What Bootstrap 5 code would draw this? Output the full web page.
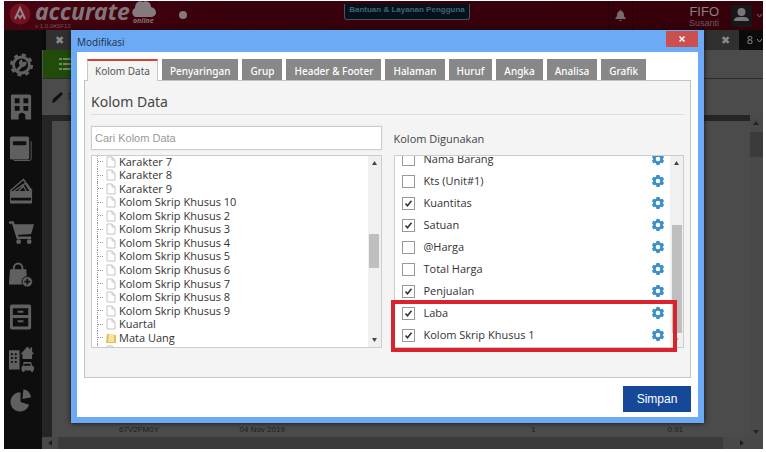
<!DOCTYPE html>
<html lang="id">
<head>
<meta charset="utf-8">
<meta name="viewport" content="width=device-width, initial-scale=1">
<title>Accurate Online</title>
<link href="https://cdn.jsdelivr.net/npm/bootstrap@5.3.0/dist/css/bootstrap.min.css" rel="stylesheet">
<style>
body{background:#fff;font:11px/14px "Open Sans","Noto Sans",sans-serif;color:#333;min-height:100vh;padding:1px 3px 3px 4px;overflow:hidden}
button{border:0;padding:0;background:none;color:inherit;font:inherit}
.app{background:#4b4b4b;color:#8a8085}
.topbar{height:29px;background:linear-gradient(90deg,#480410,#38000c 30%,#36000b);font-family:"Liberation Sans",sans-serif}
.brand{height:29px;width:172px;color:#817579;text-decoration:none;padding-left:5px}
.brand-name{font:italic bold 23px/20px "Noto Sans",sans-serif;margin-left:4px}
.brand-ver{font-size:6px;line-height:6px;left:31px;top:22px;color:#6f5058}
.brand-cloud{left:126px;top:0}
.brand-sub{font:italic bold 7px/8px "Noto Sans",sans-serif;left:129px;top:16px}
.help-btn{height:16px;background:#03121c;color:#4a616f;border:1px solid #4b5257;border-top:0;border-radius:0 0 3px 3px;font-size:8px;line-height:11px;font-weight:bold;padding:0 4px 3px}
.bell{width:25px;height:29px;border-left:1px solid #25000a;border-right:1px solid #25000a}
.user-name{font-size:13px;line-height:13px}
.user-sub{font-size:9px;line-height:10px;color:#735b62}
.avatar{width:21px;height:22px;background:#17161a}
.rail{flex:none;width:38px;background:#0e0e0e;color:#606060;gap:16px;padding-top:22px}
.rail svg{width:25px;height:26px;display:block}
.workspace{min-width:0}
.tabstrip{height:20px;background:#0b0b0b;color:#888}
.tabstrip .doc-tab{height:20px;width:27px;background:#303030}
.greenbar{height:29px;background:#4b4b4b;border-bottom:1px solid #2c2c2c;border-left:1px solid #555}
.list-tab{background:#204b08;width:40px;height:28px;color:#718565}
.tools{height:36px;background:#4b4b4b;padding-left:10px;color:#222;font-size:9px}
.canvas-bg{min-width:0;background:#252525;padding:6px 10px 0 10px;min-height:322px}
.sheet{background:#4b4b4b}
.sheet table{width:100%;table-layout:fixed;font:8px/12px "Liberation Sans",sans-serif;color:#202020}
.cell-code{padding-left:67px}
.cell-date{padding-left:13px}
.cell-qty{padding-right:40px;text-align:right}
.cell-value{padding-right:67px;text-align:right}
.vbar{flex:none;width:13px;background:#494949;color:#242424}
.vbar i,.hbar i{background:#3b3b3b;display:block}
.vbar i{height:25px;margin-top:6px}
.hbar{height:12px;background:#484848;color:#202020}
.veil{position:absolute;inset:0;padding:30px 62px 29px 71px}
.dialog-box{border:6px solid #6caaf5;border-top:0;background:#fff;box-shadow:0 0 5px #111}
.dialog-title{height:22px;background:#6caaf5;color:#1c3048;font-size:10px;padding-top:1px}
.close-btn{background:#c9504f;color:#fff;width:32px;height:16px}
.dialog-content{padding:7px 7px 5px}
.tabs-row{gap:4px;padding-left:3px;margin-bottom:-1px;position:relative}
.tabs-row button{height:22px;background:#888;color:#fff;padding:2px 8px 0;white-space:nowrap;font:500 10px/18px "Noto Sans",sans-serif;border-bottom:1px solid #bfc5bd}
.tabs-row button.active{background:#f4f4f4;color:#555;border:1px solid #c8c8c8;border-top:2px solid #cf4534;border-bottom:0;font-weight:400;padding:0 7px}
.pane{background:#f4f4f4;border:1px solid #bfc8bf;padding:10px 6px 29px}
.pane h1{font:400 14px/22px "Noto Sans",sans-serif;color:#444;margin:0 0 11px;padding-bottom:1px;border-bottom:1px solid #ddd}
.search{width:100%;height:24px;border:1px solid #ccc;outline:1px solid #eee;padding:0 3px;font:11px "Liberation Sans",sans-serif;border-radius:0;background:#fff}
.search::placeholder{color:#999}
.cols{gap:12px}
.cols>section{flex:1 1 0;min-width:0}
.scrollbox{height:193px;border:1px solid #ccc;background:#fff;overflow:hidden}
.left-box{margin-top:5px}
.used-label{height:24px;line-height:26px;margin-bottom:5px;color:#444}
.tree{height:203px;color:#333;padding-left:5px;margin-top:-1px}
.tree li{flex:1 1 0;min-height:0;border-left:1px dotted #999}
.tree li::before{content:"";width:5px;border-top:1px dotted #999;margin-right:3px}
.tree svg{width:10px;height:12px;margin-right:3px}
.sbar{width:13px;background:#f0f0f0;flex:none}
.sbar .thumb{background:#bfbfbf;width:10px}
.sbar svg,.vbar svg,.hbar svg{display:block}
.used{margin-top:-8px;padding-left:6px}
.used li{height:22px}
.tick{appearance:none;width:13px;height:13px;border:1px solid #999;background:#fff;margin:0 9px 0 1px;flex:none}
.tick:checked{background:#fff url("data:image/svg+xml,%3Csvg xmlns='http://www.w3.org/2000/svg' viewBox='0 0 11 11'%3E%3Cpath d='M2.5 5.5l2 2.3 4-5' fill='none' stroke='%23333' stroke-width='1.6'/%3E%3C/svg%3E") center/11px no-repeat}
.gear{color:#3b8fca;width:12px;height:12px;margin-right:6px}
.gear svg{width:12px;height:12px;display:block}
.highlight{position:absolute;left:-3px;right:7px;bottom:-4px;height:52px;border:4px solid #d9232e;pointer-events:none}
.save{background:#16489a;color:#fff;font:12px/26px "Liberation Sans",sans-serif;width:68px;height:26px;margin-top:8px}
</style>
<script src="https://cdn.jsdelivr.net/npm/bootstrap@5.3.0/dist/js/bootstrap.bundle.min.js"></script>
</head>
<body class="position-relative">
<div class="app">
  <header class="topbar d-flex align-items-start">
    <a href="#" class="brand position-relative d-flex align-items-start">
      <svg width="22" height="24" viewBox="0 0 22 24"><circle cx="11" cy="13" r="10.500" fill="#701221"/><path d="M6 18L11 7l5 11M9 14l2 3 2-3" fill="none" stroke="#928389" stroke-width="2"/></svg>
      <span class="brand-name">accurate</span>
      <span class="brand-ver position-absolute">v 1.0.0#SF13</span>
      <svg class="brand-cloud position-absolute" width="27" height="17" viewBox="0 0 27 17"><path d="M5 16a5 5 0 0 1 0-9C5 2 9-1 13 1c3-2 8 0 8 5 6 1 7 9 1 10z" fill="#857b7e"/></svg>
      <span class="brand-sub position-absolute">online</span>
    </a>
    <svg width="14" height="29" viewBox="0 0 14 29"><circle cx="7" cy="14" r="4" fill="#86797d"/></svg>
    <div class="flex-fill text-center ps-3"><button class="help-btn">Bantuan &amp; Layanan Pengguna</button></div>
    <button class="bell d-flex align-items-center justify-content-center me-5" aria-label="Notifikasi"><svg width="11" height="12" viewBox="0 0 11 12"><path d="M5.500 0q1 0 1 1c2 1 2.500 2 2.500 5l2 3H0l2-3c0-3 .5-4 2.500-5q0-1 1-1zM4 10h3q-1.500 2-3 0z" fill="#776a6e"/></svg></button>
    <div class="text-end ms-2 me-2"><div class="user-name mt-1">FIFO</div><div class="user-sub">Susanti</div></div>
    <button class="d-flex align-items-center mt-1 ms-1" aria-label="Akun"><span class="avatar d-block"><svg width="21" height="21" viewBox="0 0 21 21"><circle cx="10.500" cy="7" r="4" fill="#777"/><path d="M3 16q0-4 5-4h5q5 0 5 4z" fill="#777"/></svg></span><svg class="ms-1" width="7" height="6" viewBox="0 0 7 6"><path d="M1 1l2.500 3L6 1" fill="none" stroke="#777"/></svg></button>
  </header>
  <div class="d-flex">
    <nav class="rail d-flex flex-column align-items-center pe-1" aria-label="Menu utama">
      <svg viewBox="0 0 26 26"><circle cx="13" cy="13" r="8.300" fill="none" stroke="currentColor" stroke-width="3"/><circle cx="13" cy="13" r="10.500" fill="none" stroke="currentColor" stroke-width="3" stroke-dasharray="4.100 4.147"/><path d="M9 18l5-5" stroke="currentColor" stroke-width="3" stroke-linecap="round"/><path d="M17 9.500l-3 .5-.3-3a4 4 0 1 0 4.500 3z" fill="currentColor"/></svg>
      <svg viewBox="0 0 26 26"><path fill="currentColor" fill-rule="evenodd" d="M3 0h18q2 0 2 2v24h-6v-5q-4-4-7 0v5H2V2q0-2 1-2zm3 4v5h5V4zm9 0v5h5V4zM6 12v5h5v-5zm9 0v5h5v-5z"/></svg>
      <svg viewBox="0 0 26 26"><path d="M5 25h16q2 0 2-2V5" fill="none" stroke="currentColor"/><rect x="1" y="0" width="20" height="24" rx="2" fill="currentColor"/><rect x="4" y="5" width="14" height="4" rx="1" fill="#111"/></svg>
      <svg viewBox="0 0 26 26"><path d="M1 13L15 1l9 12M5 13L17 5l5 8M10 13l5-5 3 5" fill="none" stroke="currentColor" stroke-width="1.500"/><path fill="currentColor" fill-rule="evenodd" d="M3 13h20q1 0 1 1v11q0 1-1 1H2q-1 0-1-1V14q0-1 2-1zm-1 7v3h21v-3z"/></svg>
      <svg viewBox="0 0 26 26"><path d="M0 2h4l5 16h14" fill="none" stroke="currentColor" stroke-width="2.500"/><path d="M5 4h21l-3 10-15 1z" fill="currentColor"/><circle cx="10" cy="22" r="2.500" fill="currentColor"/><circle cx="21" cy="22" r="2.500" fill="currentColor"/></svg>
      <svg viewBox="0 0 26 26"><path d="M5 9V6a4.500 5 0 0 1 9 0v3" fill="none" stroke="currentColor" stroke-width="2"/><path d="M1 7h17l1 16H0z" fill="currentColor"/><circle cx="19" cy="20" r="5.500" fill="currentColor" stroke="#111"/><path d="M19 17v6M16 20h6" stroke="#111" stroke-width="1.800"/></svg>
      <svg viewBox="0 0 26 26"><path fill="currentColor" fill-rule="evenodd" d="M3 0h18q2 0 2 2v22q0 2-2 2H3q-2 0-2-2V2q0-2 2-2zm1 4v7h16V4zm0 10v9h16v-9z"/><path d="M9 7.500h6M9 17.500h6" stroke="currentColor" stroke-width="2"/></svg>
      <svg viewBox="0 0 26 26"><path fill="currentColor" fill-rule="evenodd" d="M0 4h11v20H0zm2 3v2h2V7zm4 0v2h2V7zm-4 4v2h2v-2zm4 0v2h2v-2zm-4 4v2h2v-2zm4 0v2h2v-2zM12 8l7-8 3 3V1h2v4l2 3h-2v5H14V8zm3 8h8l1 4q2 0 2 2v3h-1v2h-2v-2h-7v2h-2v-2h-1v-3q0-2 2-2zm1 2l-.5 2h7l-.5-2z"/></svg>
      <svg viewBox="0 0 26 26"><path d="M12 4v10l9 3A10 10 0 1 1 12 4z" fill="currentColor"/><path d="M15 1q6 0 8 8l-9 2z" fill="currentColor"/></svg>
    </nav>
    <main class="workspace flex-fill d-flex flex-column">
      <div class="tabstrip d-flex justify-content-between"><button class="doc-tab ms-1" aria-label="Tutup tab">✖</button><div class="d-flex"><span class="doc-tab text-start">n</span><button class="doc-tab" aria-label="Tutup dokumen">✖</button><button class="ps-2 pe-0">8 <svg width="7" height="6" viewBox="0 0 7 6"><path d="M1 1l2.500 3L6 1" fill="none" stroke="#888"/></svg></button></div></div>
      <div class="greenbar"><button class="list-tab d-flex align-items-center ps-3" aria-label="Daftar"><svg width="14" height="14" viewBox="0 0 14 14"><path d="M0 2h3m1 0h10M0 7h3m1 0h10M0 12h3m1 0h10" stroke="currentColor" stroke-width="2"/></svg></button></div>
      <div class="tools d-flex align-items-center"><svg width="12" height="12" viewBox="0 0 12 12"><path d="M0 12l1-4 8-7 2 2-8 8z" fill="#111"/></svg><span class="ms-1">P</span></div>
      <div class="d-flex flex-fill">
        <div class="canvas-bg flex-fill d-flex pe-0"><div class="sheet flex-fill d-flex align-items-end">
          <table><tbody><tr><td class="cell-code">67V2FM0Y</td><td class="cell-date">04 Nov 2019</td><td class="cell-qty">1</td><td class="cell-value">0.91</td></tr></tbody></table>
        </div></div>
        <div class="vbar d-flex flex-column justify-content-between pt-1"><div><svg width="13" height="7" viewBox="0 0 13 7"><path d="M3 6l3-4 3 4z" fill="currentColor"/></svg><i></i></div><svg width="13" height="9" viewBox="0 0 13 9"><path d="M3 2h6L6 6z" fill="currentColor"/></svg></div>
      </div>
      <div class="hbar d-flex align-items-center"><svg width="16" height="12" viewBox="0 0 16 12"><path d="M10 3v6L6 6z" fill="currentColor"/></svg><i class="flex-fill align-self-stretch me-2"></i><svg width="32" height="12" viewBox="0 0 32 12"><path d="M9 3v6l4-3z" fill="currentColor"/></svg></div>
    </main>
  </div>
</div>

<div class="veil">
  <div class="dialog-box" role="dialog" aria-labelledby="dialog-name">
    <div class="dialog-title d-flex justify-content-between align-items-start"><span id="dialog-name" class="pt-1">Modifikasi</span><button class="close-btn d-flex align-items-center justify-content-center" aria-label="Tutup"><svg width="6" height="6" viewBox="0 0 6 6"><path d="M.5.5l5 5m0-5l-5 5" stroke="#fff" stroke-width="1.500"/></svg></button></div>
    <div class="dialog-content">
      <div class="tabs-row d-flex" role="tablist">
        <button role="tab" class="active">Kolom Data</button><button role="tab">Penyaringan</button><button role="tab">Grup</button><button role="tab">Header &amp; Footer</button><button role="tab">Halaman</button><button role="tab">Huruf</button><button role="tab">Angka</button><button role="tab">Analisa</button><button role="tab">Grafik</button>
      </div>
      <div class="pane">
        <h1>Kolom Data</h1>
        <div class="cols d-flex">
          <section>
            <input class="search d-block" type="text" placeholder="Cari Kolom Data" aria-label="Cari Kolom Data">
            <div class="scrollbox left-box d-flex">
              <ul class="tree list-unstyled flex-fill d-flex flex-column mb-0" id="tree"></ul>
              <div class="sbar d-flex flex-column align-items-center"><svg width="13" height="13" viewBox="0 0 13 13"><path d="M4 9l2.500-4L9 9z" fill="#444"/></svg><div class="thumb" style="height:34px;margin-top:65px"></div><svg class="mt-auto" width="13" height="13" viewBox="0 0 13 13"><path d="M4 4l2.500 4L9 4z" fill="#444"/></svg></div>
            </div>
          </section>
          <section class="position-relative">
            <div class="used-label">Kolom Digunakan</div>
            <div class="scrollbox d-flex">
              <ul class="used list-unstyled flex-fill mb-0" id="used"></ul>
              <div class="sbar d-flex flex-column align-items-center"><svg width="13" height="13" viewBox="0 0 13 13"><path d="M4 9l2.500-4L9 9z" fill="#444"/></svg><div class="thumb" style="height:108px;margin-top:56px"></div><svg class="mt-auto" width="13" height="13" viewBox="0 0 13 13"><path d="M4 4l2.500 4L9 4z" fill="#bbb"/></svg></div>
            </div>
            <div class="highlight"></div>
          </section>
        </div>
      </div>
      <div class="d-flex justify-content-end"><button class="save">Simpan</button></div>
    </div>
  </div>
</div>
<script>
const page='<svg viewBox="0 0 10 12"><path d="M1 1h5l3 3v7H1zM6 1v3h3" fill="#fff" stroke="#c4c4c4"/></svg>';
const folder='<svg viewBox="0 0 10 12"><path d="M1 2h4l1 1h4v8H0z" fill="#e3bd55"/><path d="M3 2h5v8H2z" fill="#f6e3a0"/></svg>';
const fields=['Karakter 7','Karakter 8','Karakter 9','Kolom Skrip Khusus 10',...[2,3,4,5,6,7,8,9].map(n=>'Kolom Skrip Khusus '+n),'Kuartal','Mata Uang'];
document.getElementById('tree').innerHTML=fields.map(t=>`<li class="d-flex align-items-center">${t==='Mata Uang'?folder:page}<span>${t}</span></li>`).join('')+`<li class="d-flex align-items-center">${page}</li>`;
const gear='<svg viewBox="0 0 12 12"><path fill="currentColor" fill-rule="evenodd" d="M4.500 0h3l.5 1.700 1 .6 1.700-.5 1.300 2.500L10.700 6l1.300 1.700-1.300 2.500-1.700-.5-1 .6-.5 1.700h-3L4 10.300l-1-.6-1.700.5L0 7.700 1.300 6 0 4.300l1.300-2.500 1.700.5 1-.6zM6 3.700a2.300 2.300 0 1 0 0 4.600 2.300 2.300 0 0 0 0-4.600z"/></svg>';
const used=[['Nama Barang',0],['Kts (Unit#1)',0],['Kuantitas',1],['Satuan',1],['@Harga',0],['Total Harga',0],['Penjualan',1],['Laba',1],['Kolom Skrip Khusus 1',1]];
document.getElementById('used').innerHTML=used.map(([t,c],i)=>`<li class="d-flex align-items-center"><input class="tick" type="checkbox" id="f${i}" ${c?'checked':''}><label for="f${i}" class="flex-fill">${t}</label><button class="gear" aria-label="Atur ${t}">${gear}</button></li>`).join('');
</script>
</body>
</html>
